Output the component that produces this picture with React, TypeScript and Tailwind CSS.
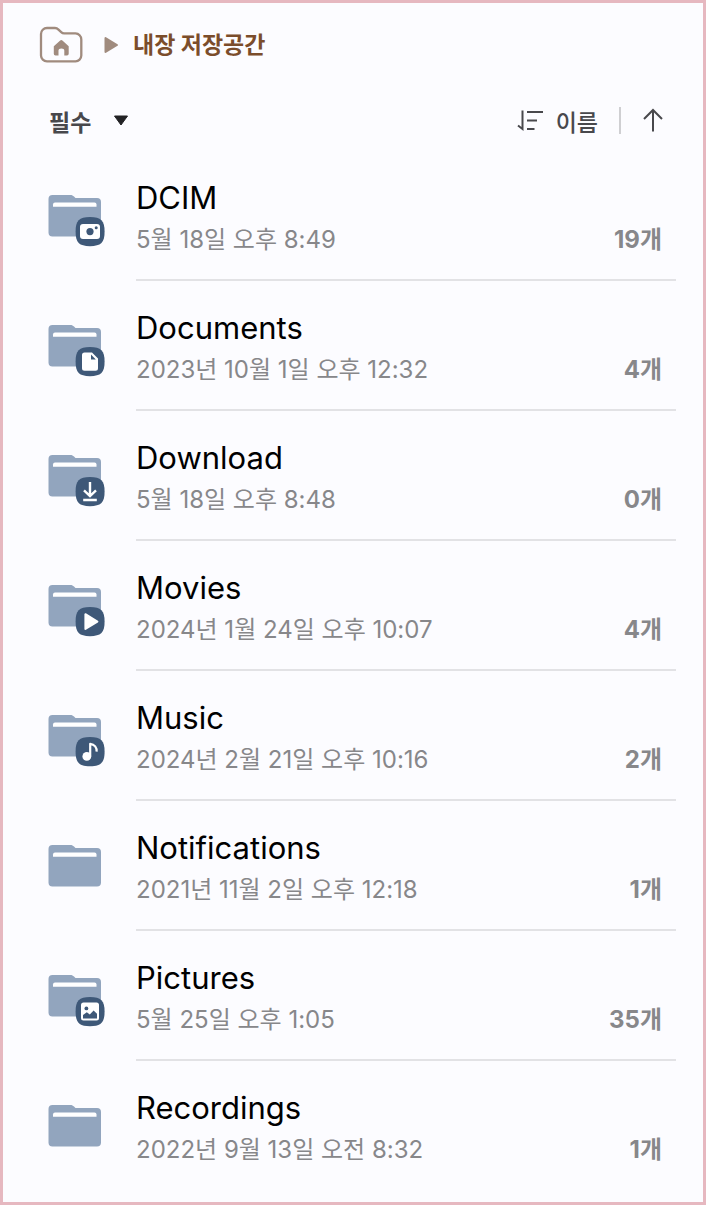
import type { ReactNode } from 'react';

type Kind = 'camera' | 'document' | 'download' | 'movie' | 'music' | 'picture';

interface Folder {
  name: string;
  date: string;
  count: number;
  kind?: Kind;
}

const folders: Folder[] = [
  { name: 'DCIM', date: '5월 18일 오후 8:49', count: 19, kind: 'camera' },
  { name: 'Documents', date: '2023년 10월 1일 오후 12:32', count: 4, kind: 'document' },
  { name: 'Download', date: '5월 18일 오후 8:48', count: 0, kind: 'download' },
  { name: 'Movies', date: '2024년 1월 24일 오후 10:07', count: 4, kind: 'movie' },
  { name: 'Music', date: '2024년 2월 21일 오후 10:16', count: 2, kind: 'music' },
  { name: 'Notifications', date: '2021년 11월 2일 오후 12:18', count: 1 },
  { name: 'Pictures', date: '5월 25일 오후 1:05', count: 35, kind: 'picture' },
  { name: 'Recordings', date: '2022년 9월 13일 오전 8:32', count: 1 },
];

/* Badge drawings are centred on 0,0. */
const badges: Record<Kind, ReactNode> = {
  camera: (
    <>
      <rect x="-10" y="-7.5" width="20" height="15" rx="3" fill="#fff" />
      <circle r="3.6" fill="#3e5878" />
      <circle cx="6.2" cy="-3.8" r="1.5" fill="#3e5878" />
    </>
  ),
  document: (
    <>
      <path d="M-5.5 -9.2H2L8 -3V6.7a2.500 2.500 0 0 1-2.500 2.500H-5.500a2.500 2.500 0 0 1-2.500-2.500V-6.700a2.500 2.500 0 0 1 2.500-2.500Z" fill="#fff" />
      <path d="M1 -7V-2.2H5.8Z" fill="#3e5878" />
    </>
  ),
  download: (
    <path d="M0 -9.5V4M-6 -1.2L0 4.6L6 -1.2M-6.8 8.4H6.8" fill="none" stroke="#fff" strokeWidth="2.4" />
  ),
  movie: (
    <path d="M-4.6 -7.4V7.4L7.4 0Z" fill="#fff" stroke="#fff" strokeWidth="2" strokeLinejoin="round" />
  ),
  music: (
    <>
      <circle cx="-3.2" cy="4.8" r="4.4" fill="#fff" />
      <path d="M0.2 5V-7.8C4.6 -7.4 7 -4 6.6 0" fill="none" stroke="#fff" strokeWidth="2.2" strokeLinejoin="round" />
    </>
  ),
  picture: (
    <>
      <rect x="-9" y="-9" width="18" height="18" rx="2.5" fill="#fff" />
      <circle cx="-3.6" cy="-3.2" r="1.9" fill="#3e5878" />
      <path d="M-7 6.8V3.4L-3.2 0.6L-0.2 3L3.6 -1L7 2.2V6.8Z" fill="#3e5878" />
    </>
  ),
};

function FolderIcon({ kind }: { kind?: Kind }) {
  return (
    <svg viewBox="0 0 60 54" className="h-[54px] w-[60px] shrink-0" aria-hidden="true">
      <path
        d="M6.5 2H24.5C26 2 27 2.6 28 3.6L29.5 5H51A4 4 0 0 1 55 9V39.5A4 4 0 0 1 51 43.5H6.5A4 4 0 0 1 2.5 39.5V6A4 4 0 0 1 6.5 2Z"
        fill="#92a5be"
      />
      <path d="M7 13.8V11.5A2 2 0 0 1 9 9.5H48.5A2 2 0 0 1 50.5 11.5V13.8Z" fill="#fff" />
      {kind && (
        <>
          <path
            d="M44 24C55 24 58.6 27.6 58.6 38.6S55 53.2 44 53.2S29.6 49.6 29.6 38.6S33 24 44 24Z"
            fill="#3e5878"
          />
          <g transform="translate(44 38.6)">{badges[kind]}</g>
        </>
      )}
    </svg>
  );
}

export default function App() {
  return (
    <div className="min-h-screen border-3 border-[#e6b8c0] bg-[#fcfcff] font-['Inter','Noto_Sans_CJK_KR',sans-serif]">
      <nav aria-label="경로" className="flex h-[84px] items-center pl-[36px]">
        <a href="#home" aria-label="홈" className="shrink-0">
          <svg viewBox="0 0 44 38" className="h-[38px] w-[44px]" aria-hidden="true">
            <path
              d="M8 2H16C17.5 2 18.5 2.600 19.5 3.600L22.2 6.200C23 7 24 7.400 25.2 7.400H36.5A6 6 0 0 1 42.3 13.400V29.5A6 6 0 0 1 36.5 35.4H8A6 6 0 0 1 2 29.5V8A6 6 0 0 1 8 2Z"
              fill="none"
              stroke="#a08b7e"
              strokeWidth="2.3"
            />
            <path
              d="M21.2 14.400Q22.3 13.400 23.4 14.400L29.7 20.200V27.800Q29.7 29.500 28 29.500H25.3V24.500Q25.3 22.500 22.4 22.500T19.5 24.500V29.500H16.5Q14.8 29.500 14.8 27.800V20.200Z"
              fill="#a08b7e"
            />
          </svg>
        </a>
        <svg viewBox="0 0 16 18" className="ml-5 h-[18px] w-4 shrink-0" aria-hidden="true">
          <path d="M2.5 2V16L14 9Z" fill="#a08b7e" stroke="#a08b7e" strokeWidth="2" strokeLinejoin="round" />
        </svg>
        <a href="#internal" className="ml-[14px] text-[23px] leading-8 font-bold text-[#7b4d2b]">
          내장 저장공간
        </a>
      </nav>

      <div className="flex h-16 items-center justify-between pt-2 pr-[39px] pl-[46px]">
        <div className="relative flex items-center">
          <select
            aria-label="필터"
            className="w-[84px] appearance-none bg-transparent text-[23px] leading-8 font-bold text-[#48484c]"
          >
            <option>필수</option>
          </select>
          <svg
            viewBox="0 0 16 12"
            className="pointer-events-none absolute top-2 right-1 h-3 w-4"
            aria-hidden="true"
          >
            <path d="M1.5 1H14.5L8 10Z" fill="#222225" stroke="#222225" strokeLinejoin="round" />
          </svg>
        </div>
        <div className="flex items-start">
          <button type="button" className="flex items-start gap-3 text-[23px] leading-8 font-medium text-[#48484c]">
            <svg viewBox="0 0 28 27" className="h-[27px] w-7" fill="none" stroke="#48484c" strokeWidth="2" aria-hidden="true">
              <path d="M6.5 3.500V22L2 18.500M11 5H27M11 13.500H21M11 22H18.500" />
            </svg>
            이름
          </button>
          <span className="mx-[21px] h-[27px] w-[2px] bg-[#cfcfd2]" />
          <button type="button" aria-label="오름차순" className="flex">
            <svg viewBox="0 0 22 27" className="h-[27px] w-[22px]" fill="none" stroke="#48484c" strokeWidth="2" aria-hidden="true">
              <path d="M11 24.500V3.500M2 12L11 3L20 12" />
            </svg>
          </button>
        </div>
      </div>

      <ul className="pr-[27px] pl-[43px]">
        {folders.map((folder) => (
          <li key={folder.name} className="group">
            <a href={`#${folder.name}`} className="flex gap-[30px]">
              <span className="pt-[42px]">
                <FolderIcon kind={folder.kind} />
              </span>
              <span className="flex h-[130px] min-w-0 grow flex-col border-b-2 border-[#e2e2e5] pt-[25px] pr-[14px] group-last:border-transparent">
                <span className="text-[31px] leading-[44px] text-black">{folder.name}</span>
                <span className="flex items-center justify-between text-[24px] leading-10 text-[#87878a]">
                  <span>{folder.date}</span>
                  <span className="font-bold">{folder.count}개</span>
                </span>
              </span>
            </a>
          </li>
        ))}
      </ul>
    </div>
  );
}
